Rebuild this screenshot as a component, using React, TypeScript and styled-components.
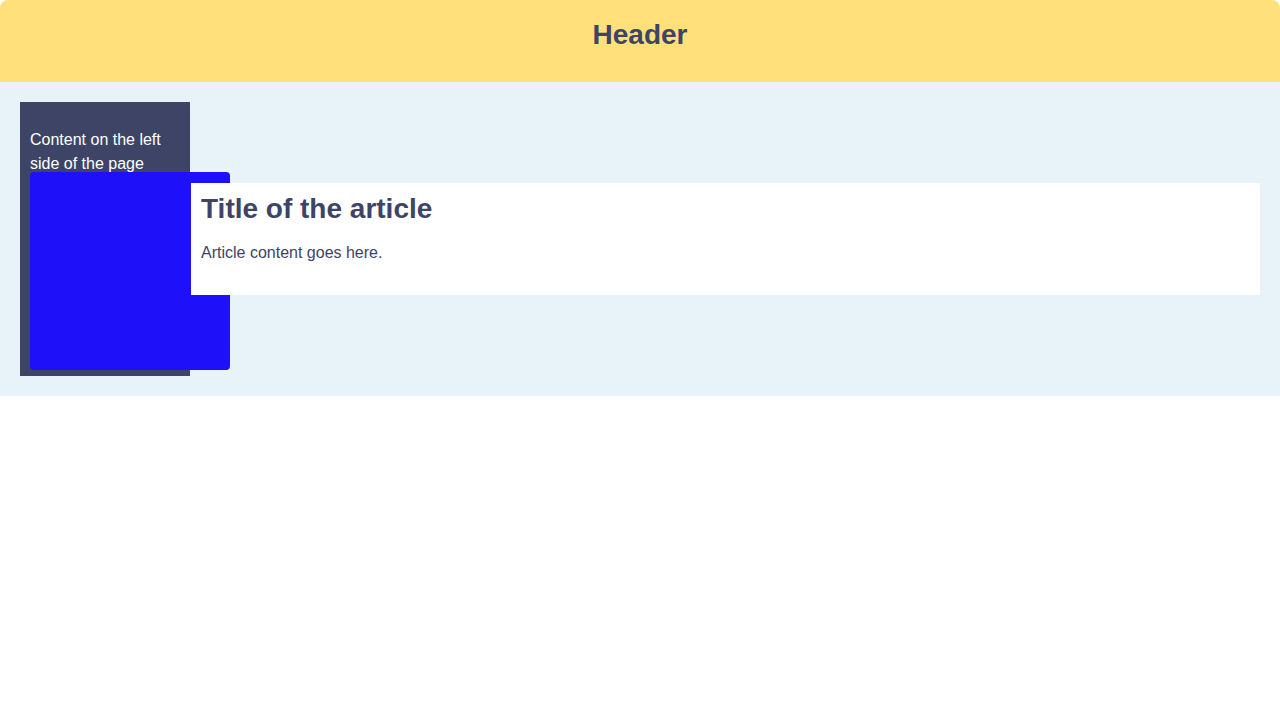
import React from "react";
import styled, { createGlobalStyle } from "styled-components";

const GlobalStyle = createGlobalStyle`
  html, body {
    margin: 0;
    padding: 0;
    background: #ffffff;
    font-family: "Liberation Sans", Arial, Helvetica, sans-serif;
  }
  * { box-sizing: border-box; }
`;

const Header = styled.header`
  background: #ffe07a;
  border-radius: 8px 8px 0 0;
  height: 82px;
  padding: 19px 20px 0;
  text-align: center;
`;

const HeaderTitle = styled.h1`
  margin: 0;
  font-size: 28px;
  font-weight: 700;
  line-height: 32px;
  color: #3d4466;
`;

const Main = styled.main`
  background: #e8f3f9;
  padding: 20px;
  display: flex;
  align-items: center;
`;

const Sidebar = styled.aside`
  flex: 0 0 170px;
  width: 170px;
  height: 274px;
  background: #3d4466;
  padding: 10px;
  color: #ffffff;
`;

const SidebarText = styled.p`
  margin: 16px 0 0;
  font-size: 16px;
  line-height: 24px;
`;

const BlueBlock = styled.div`
  margin-top: -4px;
  width: 200px;
  height: 198px;
  background: #1f10fa;
  border-radius: 4px;
`;

const Article = styled.article`
  flex: 1;
  margin-left: 1px;
  background: #ffffff;
  height: 112px;
  padding: 10px 10px 0;
  color: #3d4466;
`;

const ArticleTitle = styled.h2`
  margin: 0 0 19px;
  font-size: 28px;
  font-weight: 700;
  line-height: 32px;
`;

const ArticleText = styled.p`
  margin: 0;
  font-size: 16px;
  line-height: 18px;
`;

export default function App() {
  return (
    <>
      <GlobalStyle />
      <Header>
        <HeaderTitle>Header</HeaderTitle>
      </Header>
      <Main>
        <Sidebar>
          <SidebarText>Content on the left side of the page</SidebarText>
          <BlueBlock />
        </Sidebar>
        <Article>
          <ArticleTitle>Title of the article</ArticleTitle>
          <ArticleText>Article content goes here.</ArticleText>
        </Article>
      </Main>
    </>
  );
}
